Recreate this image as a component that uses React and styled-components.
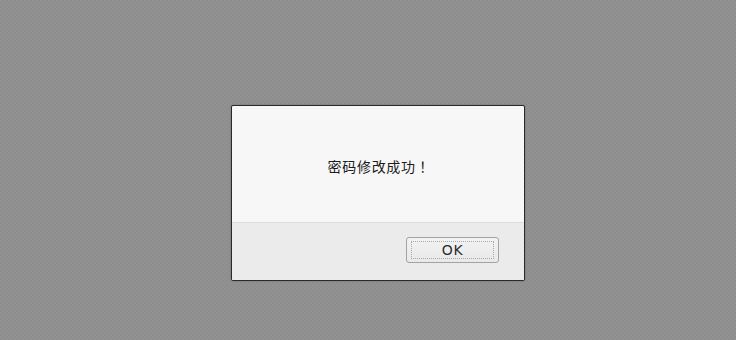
import React from 'react';
import styled, { createGlobalStyle } from 'styled-components';

const GlobalStyle = createGlobalStyle`
    html, body {
        margin: 0;
        padding: 0;
    }
    body {
        font-family: "DejaVu Sans", "Noto Sans CJK SC", sans-serif;
        background-color: #8f8f8f;
        background-image: repeating-conic-gradient(#8d8d8d 0% 25%, #929292 0% 50%);
        background-size: 4px 4px;
    }
`

const Page = styled.div`
    width: 736px;
    height: 340px;
    box-sizing: border-box;
    padding: 105px 0 0 231px;
`

const Dialog = styled.div`
    width: 294px;
    height: 176px;
    box-sizing: border-box;
    border: 1px solid #2a2a2a;
    border-radius: 2px;
    background: #f7f7f7;
    display: flex;
    flex-direction: column;
    overflow: hidden;
    box-shadow: 0 0 2px rgba(0, 0, 0, 0.25);
`

const Message = styled.div`
    height: 116px;
    display: flex;
    align-items: center;
    justify-content: center;
    padding: 3px 0 0 2px;
    box-sizing: border-box;
    font-family: "Noto Sans CJK SC", sans-serif;
    font-size: 14px;
    color: #1c1c1c;
    letter-spacing: 0.7px;
`

/* centred full-width exclamation mark, as in the JP/TC forms */
const Bang = styled.span`
    font-family: "Noto Sans CJK JP", sans-serif;
`

const Footer = styled.div`
    flex: 1;
    background: #ebebeb;
    border-top: 1px solid #dddddd;
    display: flex;
    justify-content: flex-end;
    align-items: flex-start;
    padding: 14px 25px 0 0;
`

const Button = styled.button`
    width: 93px;
    height: 26px;
    padding: 3px 4px;
    border: 1px solid #a3a3a3;
    border-radius: 3px;
    background: linear-gradient(#f2f2f2, #e9e9e9);
    box-sizing: border-box;
    cursor: pointer;
`

const FocusRing = styled.span`
    display: flex;
    align-items: center;
    justify-content: center;
    height: 100%;
    border: 1px dotted #a8a8a8;
    box-sizing: border-box;
    font-family: "DejaVu Sans", sans-serif;
    font-size: 14px;
    color: #2b2b2b;
    letter-spacing: 0.6px;
`

export default function App() {
    return (
        <>
            <GlobalStyle />
            <Page>
                <Dialog>
                    <Message>密码修改成功<Bang>！</Bang></Message>
                    <Footer>
                        <Button><FocusRing>OK</FocusRing></Button>
                    </Footer>
                </Dialog>
            </Page>
        </>
    );
}
